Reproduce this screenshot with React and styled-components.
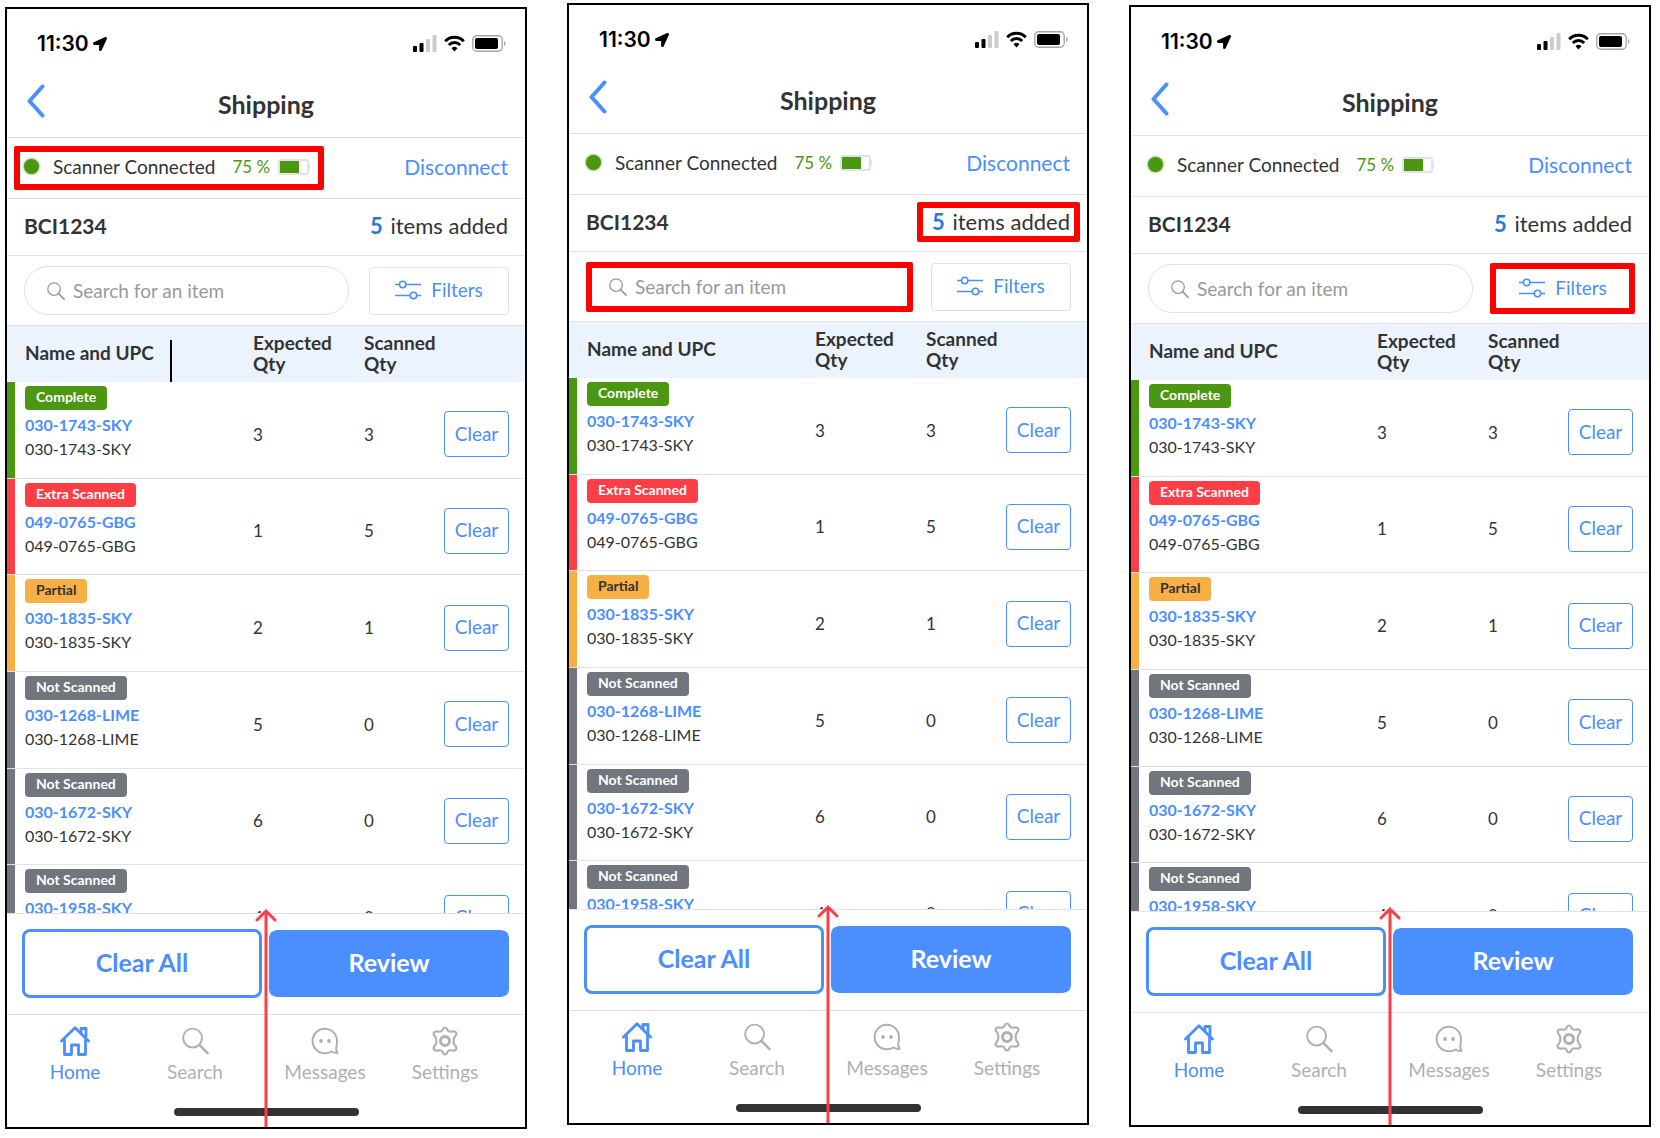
import React from 'react';
import styled, { createGlobalStyle } from 'styled-components';
import { FaLocationArrow } from 'react-icons/fa';

const BLUE = '#4b8efe';
const LINE = '#e1e1ea';
const GREEN = '#4b9712';

const GlobalStyle = createGlobalStyle`
  *, *::before, *::after { box-sizing: border-box; }
  body { margin: 0; background: #fff; }
  button, input { font: inherit; }
`;

const Page = styled.main`
  display: grid;
  grid-template-columns: repeat(3, minmax(0, 1fr));
  align-items: start;
  gap: 40px;
  padding: 0 9px 0 5px;
  font-family: Lato, 'Open Sans', sans-serif;
  color: #333;
`;

const Phone = styled.section`
  position: relative;
  margin-top: ${(p) => p.$top}px;
  border: 2px solid #000;
  background: #fff;
`;

const StatusBar = styled.div`
  display: flex;
  align-items: center;
  justify-content: space-between;
  height: 69px;
  padding: 0 19px 0 30px;
  color: #000;
`;

const Clock = styled.span`
  display: flex;
  align-items: center;
  gap: 4px;
  font-family: Inter, sans-serif;
  font-size: 21px;
  font-weight: 600;
`;

const StatusIcons = styled.span`
  display: flex;
  align-items: center;
  gap: 7px;
  svg { display: block; }
`;

const NavBar = styled.header`
  display: grid;
  grid-template-columns: 48px 1fr 48px;
  align-items: center;
  height: 60px;
  border-bottom: 1px solid ${LINE};
`;

const BackButton = styled.button`
  display: flex;
  align-items: center;
  height: 59px;
  padding: 0 0 14px 20px;
  border: 0;
  background: none;
`;

const Title = styled.h1`
  margin: 0;
  padding-bottom: 7px;
  text-align: center;
  font-size: 25px;
  line-height: 32px;
  font-weight: 700;
`;

const InfoRow = styled.div`
  display: flex;
  align-items: center;
  justify-content: space-between;
  height: ${(p) => p.$height}px;
  padding: 0 17px 3px 17px;
  border-bottom: 1px solid ${LINE};
  font-size: 21px;
`;

const Scanner = styled.div`
  position: relative;
  display: flex;
  align-items: center;
  font-size: 19px;
`;

const Dot = styled.span`
  width: 15px;
  height: 15px;
  margin-right: 14px;
  border-radius: 50%;
  background: ${GREEN};
  box-shadow: 0 0 3px ${GREEN};
`;

const Charge = styled.span`
  margin: 0 8px 0 17px;
  color: ${GREEN};
  font-size: 17px;
`;

const TextButton = styled.button`
  padding: 0;
  border: 0;
  background: none;
  color: ${BLUE};
`;

const OrderId = styled.strong`
  font-weight: 700;
`;

const Count = styled.span`
  position: relative;
  font-size: 22px;
  line-height: 25px;
  b { margin-right: 2px; color: #2579dd; font-weight: 700; }
`;

const Tools = styled.div`
  display: flex;
  align-items: center;
  gap: 20px;
  height: 70px;
  padding: 0 16px 0 17px;
  border-bottom: 1px solid ${LINE};
`;

const SearchBox = styled.label`
  position: relative;
  flex: 1;
  min-width: 0;
  display: flex;
  align-items: center;
  gap: 8px;
  height: 49px;
  padding: 0 20px 0 22px;
  border: 1px solid ${LINE};
  border-radius: 24px;
  svg { flex: none; }
  input {
    flex: 1;
    min-width: 0;
    padding: 0;
    border: 0;
    outline: 0;
    background: none;
    font-size: 19px;
    color: #333;
  }
  input::placeholder { color: #999; opacity: 1; }
`;

const FilterButton = styled.button`
  position: relative;
  display: flex;
  align-items: center;
  justify-content: center;
  gap: 10px;
  width: 140px;
  height: 48px;
  padding-bottom: 3px;
  border: 1px solid ${LINE};
  border-radius: 4px;
  background: #fff;
  color: ${BLUE};
  font-size: 19px;
`;

// Red call-out frame drawn over its parent
const Highlight = styled.span`
  position: absolute;
  inset: ${(p) => p.$inset};
  border: 6px solid #f00;
  border-radius: 2px;
  pointer-events: none;
`;

const ListArea = styled.div`
  height: 587px;
  overflow: hidden;
`;

const Table = styled.table`
  width: 100%;
  height: 636px;
  table-layout: fixed;
  border-spacing: 0;
  th {
    position: relative;
    height: 56px;
    padding: 0 0 3px;
    background: #ebf3fe;
    text-align: left;
    font-size: 19px;
    line-height: 21px;
    font-weight: 700;
  }
  th:first-child { padding-left: 18px; }
  td {
    padding: 9px 0 0;
    border-bottom: 1px solid ${LINE};
    font-size: 17px;
  }
`;

const Divider = styled.span`
  position: absolute;
  left: 163px;
  bottom: 0;
  width: 2px;
  height: 42px;
  background: #000;
`;

const ItemCell = styled.td`
  && { padding: 4px 0 0 18px; font-size: 16px; }
  vertical-align: top;
  line-height: 24px;
  box-shadow: inset 8px 0 ${(p) => p.$color};
  a, span { display: block; }
  a { margin-top: 3px; color: ${BLUE}; font-weight: 700; text-decoration: none; }
`;

const Badge = styled.b`
  display: table;
  height: 24px;
  padding: 0 11px;
  border-radius: 4px;
  background: ${(p) => p.$color};
  color: ${(p) => p.$text};
  font-size: 14px;
  line-height: 22px;
  font-weight: 700;
`;

const ClearButton = styled.button`
  width: 65px;
  height: 46px;
  padding: 0 0 2px;
  border: 1px solid ${BLUE};
  border-radius: 4px;
  background: #fff;
  color: ${BLUE};
  font-size: 19px;
`;

const Actions = styled.div`
  display: grid;
  grid-template-columns: 1fr 1fr;
  gap: 7px;
  padding: 15px 16px 16px 15px;
  border-top: 1px solid ${LINE};
`;

const ActionButton = styled.button`
  height: 69px;
  padding: 0 0 3px;
  border: 3px solid ${(p) => (p.$filled ? '#fff' : BLUE)};
  border-width: ${(p) => (p.$filled ? '1px 0' : '3px')};
  border-radius: 8px;
  background: ${(p) => (p.$filled ? BLUE : '#fff')};
  background-clip: padding-box;
  color: ${(p) => (p.$filled ? '#fff' : BLUE)};
  font-size: 25px;
  font-weight: 700;
`;

const TabBar = styled.nav`
  display: grid;
  grid-template-columns: 120fr 120fr 140fr 100fr;
  padding: 11px 30px 0 8px;
  border-top: 1px solid ${LINE};
`;

const Tab = styled.a`
  display: flex;
  flex-direction: column;
  align-items: center;
  gap: 4px;
  color: ${(p) => (p.$active ? BLUE : '#afafb8')};
  font-size: 19px;
  line-height: 24px;
  text-decoration: none;
  svg { height: 30px; }
`;

const HomeIndicator = styled.div`
  width: 185px;
  height: 8px;
  margin: 24px auto 11px;
  border-radius: 4px;
  background: #333;
`;

const SwipeArrow = styled.svg`
  position: absolute;
  left: calc(50% - 11px);
  bottom: 0;
`;

const Signal = () => (
  <svg width="24" height="17" viewBox="0 0 24 17">
    <rect x="0" y="11" width="4" height="6" rx="1" />
    <rect x="6.5" y="8" width="4" height="9" rx="1" />
    <rect x="13" y="4" width="4" height="13" rx="1" fill="#ccc" />
    <rect x="19.5" y="0" width="4" height="17" rx="1" fill="#ccc" />
  </svg>
);

const Wifi = () => (
  <svg width="21" height="17" viewBox="0 0 21 17" fill="none" stroke="#000" strokeWidth="3">
    <path d="M1.2 6.2a13.2 13.2 0 0 1 18.6 0" />
    <path d="M4.8 10a8 8 0 0 1 11.4 0" />
    <path d="M10.5 16.5l-3-3.2a4.3 4.3 0 0 1 6 0z" fill="#000" stroke="none" />
  </svg>
);

const PhoneBattery = () => (
  <svg width="34" height="17" viewBox="0 0 34 17">
    <rect x="0.8" y="0.8" width="29.4" height="15.4" rx="4" fill="none" stroke="#a6a6a6" strokeWidth="1.4" />
    <rect x="3" y="3" width="23" height="11" rx="2" />
    <path d="M32 6c2 .8 2 4.2 0 5z" fill="#a6a6a6" />
  </svg>
);

const ScannerBattery = () => (
  <svg width="34" height="16" viewBox="0 0 34 16">
    <rect x="1" y="1" width="29" height="14" rx="2" fill="#fff" stroke={LINE} strokeWidth="2" />
    <rect x="2" y="2" width="19" height="12" fill={GREEN} />
    <rect x="30" y="5" width="2" height="6" rx="1" fill={LINE} />
  </svg>
);

const Magnifier = ({ size, color, width }) => (
  <svg width={size} height={size} viewBox="0 0 28 28" fill="none" stroke={color} strokeLinecap="round">
    <circle cx="11" cy="11" r="9.8" strokeWidth={width} />
    <path d="M18 18l8.5 8.5" strokeWidth={width * 1.3} />
  </svg>
);

const Sliders = () => (
  <svg width="26" height="20" viewBox="0 0 26 20" fill="none" stroke={BLUE} strokeWidth="1.5">
    <path d="M0 4.5h4.5M11 4.5h15M0 15.5h15M22 15.5h4" />
    <circle cx="7.7" cy="4.5" r="3.2" />
    <circle cx="18.5" cy="15.5" r="3.2" />
  </svg>
);

const HomeIcon = () => (
  <svg width="30" height="30" viewBox="0 0 30 30" fill="none" stroke={BLUE} strokeWidth="2.8" strokeLinejoin="round" strokeLinecap="round">
    <path d="M1.5 15L15 1.8 28.5 15M4.5 14v14.5h7V19h7v9.5h7V14" />
    <path d="M21 7V2.5h5V11" />
  </svg>
);

const MessageIcon = () => (
  <svg width="28" height="28" viewBox="0 0 28 28" fill="none" stroke="#afafb8" strokeWidth="2" strokeLinejoin="round">
    <path d="M26 14A12.2 12.2 0 1 0 14 26.2c2.6 0 4.7-.6 6.5-1.7 1.8 1.3 3.5 1.7 6 1.6-1-1.7-1.4-3-1.3-5 .5-2 .8-4.5.8-7.1z" />
    <circle cx="10" cy="14" r="1.9" fill="#afafb8" stroke="none" />
    <circle cx="18" cy="14" r="1.9" fill="#afafb8" stroke="none" />
  </svg>
);

const GearIcon = () => (
  <svg width="28" height="30" viewBox="0 0 28 30" fill="none" stroke="#afafb8" strokeWidth="2.2" strokeLinejoin="round">
    <path d="M14 1.5c1.5 0 1.9 1 2.3 2.2.6 1.7 1.7 2.3 3.5 2 2.2-.5 4.2-.9 5.3.9 1 1.7-.3 2.9-1.2 4-1.7 2-1.7 6.8 0 8.8.9 1.1 2.2 2.3 1.2 4-1.1 1.8-3.1 1.4-5.3.9-1.8-.3-2.9.3-3.5 2-.4 1.2-.8 2.2-2.3 2.2s-1.9-1-2.3-2.2c-.6-1.7-1.7-2.3-3.5-2-2.2.5-4.2.9-5.3-.9-1-1.7.3-2.9 1.2-4 1.7-2 1.7-6.8 0-8.8-.9-1.1-2.2-2.3-1.2-4 1.1-1.8 3.1-1.4 5.3-.9 1.8.3 2.9-.3 3.5-2 .4-1.2.8-2.2 2.3-2.2z" />
    <circle cx="14" cy="15" r="4.5" strokeWidth="3" />
  </svg>
);

const STATUS = {
  complete: { label: 'Complete', color: GREEN, text: '#fff' },
  extra: { label: 'Extra Scanned', color: '#fe3e47', text: '#fff' },
  partial: { label: 'Partial', color: '#f7b046', text: '#333' },
  none: { label: 'Not Scanned', color: '#71757e', text: '#fff' },
};

const items = [
  { sku: '030-1743-SKY', status: 'complete', expected: 3, scanned: 3 },
  { sku: '049-0765-GBG', status: 'extra', expected: 1, scanned: 5 },
  { sku: '030-1835-SKY', status: 'partial', expected: 2, scanned: 1 },
  { sku: '030-1268-LIME', status: 'none', expected: 5, scanned: 0 },
  { sku: '030-1672-SKY', status: 'none', expected: 6, scanned: 0 },
  { sku: '030-1958-SKY', status: 'none', expected: 4, scanned: 0 },
];

const tabs = [
  { label: 'Home', icon: <HomeIcon />, active: true },
  { label: 'Search', icon: <Magnifier size={27} color="#afafb8" width={2} /> },
  { label: 'Messages', icon: <MessageIcon /> },
  { label: 'Settings', icon: <GearIcon /> },
];

const ShippingScreen = ({ top, marks, divider }) => (
  <Phone $top={top}>
    <StatusBar>
      <Clock>
        11:30
        <FaLocationArrow size={14} />
      </Clock>
      <StatusIcons>
        <Signal />
        <Wifi />
        <PhoneBattery />
      </StatusIcons>
    </StatusBar>

    <NavBar>
      <BackButton aria-label="Back">
        <svg width="20" height="34" viewBox="0 0 20 34" fill="none" stroke={BLUE} strokeWidth="4" strokeLinecap="round" strokeLinejoin="round">
          <path d="M15.5 2.5L2.5 17l13 14.5" />
        </svg>
      </BackButton>
      <Title>Shipping</Title>
    </NavBar>

    <InfoRow $height={61}>
      <Scanner>
        <Dot />
        Scanner Connected
        <Charge>75 %</Charge>
        <ScannerBattery />
        {marks.includes('scanner') && <Highlight $inset="-9px -12px -12px -10px" />}
      </Scanner>
      <TextButton>Disconnect</TextButton>
    </InfoRow>

    <InfoRow $height={57}>
      <OrderId>BCI1234</OrderId>
      <Count>
        <b>5</b> items added
        {marks.includes('count') && <Highlight $inset="-7px -10px -8px -15px" />}
      </Count>
    </InfoRow>

    <Tools>
      <SearchBox>
        <Magnifier size={18} color="#999" width={2} />
        <input type="search" placeholder="Search for an item" aria-label="Search for an item" />
        {marks.includes('search') && <Highlight $inset="-1px -3px -2px -1px" />}
      </SearchBox>
      <FilterButton>
        <Sliders />
        Filters
        {marks.includes('filters') && <Highlight $inset="-3px -3px -2px -4px" />}
      </FilterButton>
    </Tools>

    <ListArea>
      <Table>
        <colgroup>
          <col />
          <col width="111" />
          <col width="80" />
          <col width="81" />
        </colgroup>
        <thead>
          <tr>
            <th>
              Name and UPC
              {divider && <Divider />}
            </th>
            <th>Expected<br />Qty</th>
            <th>Scanned<br />Qty</th>
            <th />
          </tr>
        </thead>
        <tbody>
          {items.map(({ sku, status, expected, scanned }) => {
            const { label, color, text } = STATUS[status];
            return (
              <tr key={sku}>
                <ItemCell $color={color}>
                  <Badge $color={color} $text={text}>{label}</Badge>
                  <a href="#item">{sku}</a>
                  <span>{sku}</span>
                </ItemCell>
                <td>{expected}</td>
                <td>{scanned}</td>
                <td><ClearButton>Clear</ClearButton></td>
              </tr>
            );
          })}
        </tbody>
      </Table>
    </ListArea>

    <Actions>
      <ActionButton>Clear All</ActionButton>
      <ActionButton $filled>Review</ActionButton>
    </Actions>

    <TabBar>
      {tabs.map(({ label, icon, active }) => (
        <Tab key={label} href="#tab" $active={active}>
          {icon}
          {label}
        </Tab>
      ))}
    </TabBar>
    <HomeIndicator />

    <SwipeArrow width="22" height="218" viewBox="0 0 22 218" fill="none" stroke="#fb3f49" strokeWidth="3" strokeLinecap="round">
      <path d="M11 218V2M2 11l9-9 9 9" />
    </SwipeArrow>
  </Phone>
);

const App = () => (
  <>
    <GlobalStyle />
    <Page>
      <ShippingScreen top={7} marks={['scanner']} divider />
      <ShippingScreen top={3} marks={['count', 'search']} />
      <ShippingScreen top={5} marks={['filters']} />
    </Page>
  </>
);

export default App;
